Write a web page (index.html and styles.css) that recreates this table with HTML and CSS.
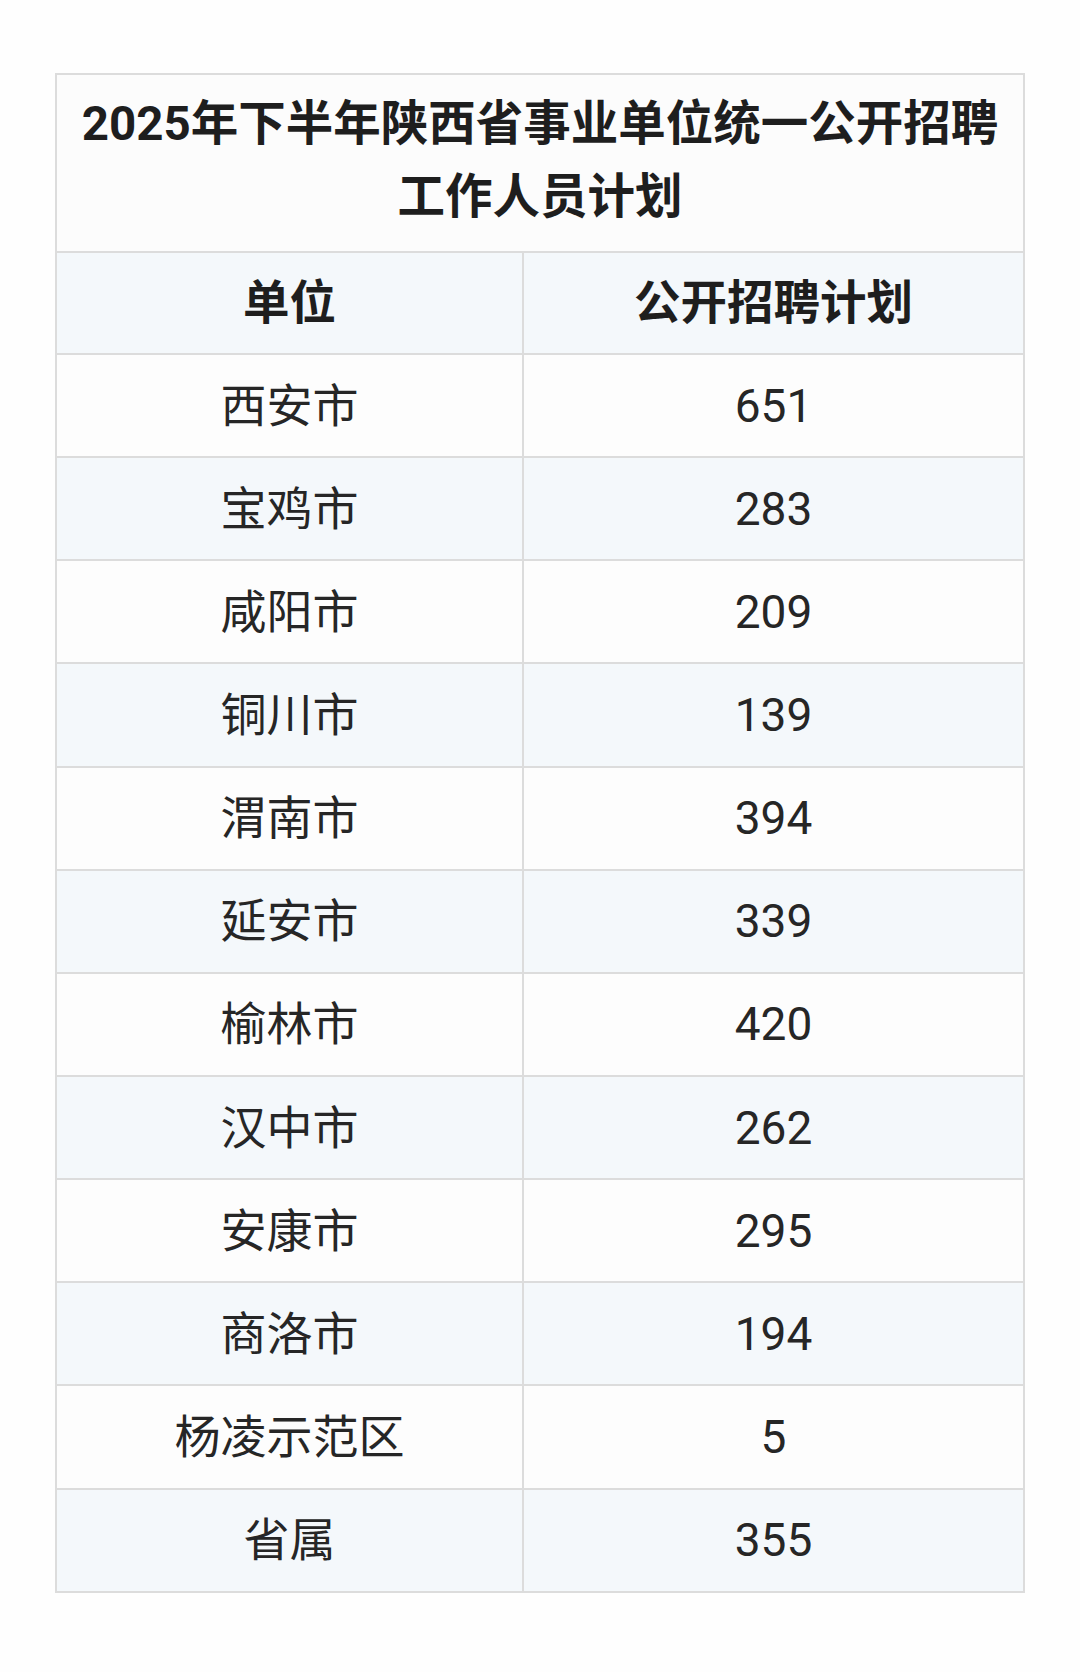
FILE: index.html
```html
<!DOCTYPE html>
<html lang="zh-CN">
<head>
<meta charset="utf-8">
<title>2025年下半年陕西省事业单位统一公开招聘工作人员计划</title>
<link rel="stylesheet" href="styles.css">
</head>
<body>
<main class="page">
  <table class="plan">
    <colgroup>
      <col class="col-unit">
      <col class="col-num">
    </colgroup>
    <thead>
      <tr class="title-row">
        <th colspan="2" class="title">2025年下半年陕西省事业单位统一公开招聘<br>工作人员计划</th>
      </tr>
      <tr class="head-row">
        <th>单位</th>
        <th>公开招聘计划</th>
      </tr>
    </thead>
    <tbody>
      <tr><td>西安市</td><td>651</td></tr>
      <tr><td>宝鸡市</td><td>283</td></tr>
      <tr><td>咸阳市</td><td>209</td></tr>
      <tr><td>铜川市</td><td>139</td></tr>
      <tr><td>渭南市</td><td>394</td></tr>
      <tr><td>延安市</td><td>339</td></tr>
      <tr><td>榆林市</td><td>420</td></tr>
      <tr><td>汉中市</td><td>262</td></tr>
      <tr><td>安康市</td><td>295</td></tr>
      <tr><td>商洛市</td><td>194</td></tr>
      <tr><td>杨凌示范区</td><td>5</td></tr>
      <tr><td>省属</td><td>355</td></tr>
    </tbody>
  </table>
</main>
</body>
</html>
```
FILE: styles.css
```css
html, body {
  margin: 0;
  padding: 0;
  background: #fefefe;
}

body {
  font-family: Roboto, "Noto Sans CJK SC", "Noto Sans", sans-serif;
  color: #222;
}

.page {
  padding: 73px 0 80px;
}

.plan {
  width: 970px;
  margin: 0 auto;
  border-collapse: collapse;
  table-layout: fixed;
  border: 2px solid #dcdcdc;
}

.col-unit {
  width: 467px;
}

.plan th,
.plan td {
  border: 2px solid #dcdcdc;
  text-align: center;
  vertical-align: middle;
  padding: 0;
  line-height: 1;
}

.title-row {
  height: 178px;
}

.plan .title {
  background: #fcfcfc;
  font-size: 47.5px;
  font-weight: 700;
  line-height: 73px;
  padding-bottom: 4px;
  color: #1e1e1e;
}

.head-row {
  height: 102px;
  background: #f4f8fb;
}

.head-row th {
  font-size: 46.5px;
  font-weight: 700;
  color: #1e1e1e;
}

.plan tbody tr {
  height: 103.15px;
  background: #fdfdfd;
}

.plan tbody tr:nth-child(even) {
  background: #f4f8fb;
}

.plan td {
  font-size: 46px;
  font-weight: 400;
  color: #262626;
}
```
